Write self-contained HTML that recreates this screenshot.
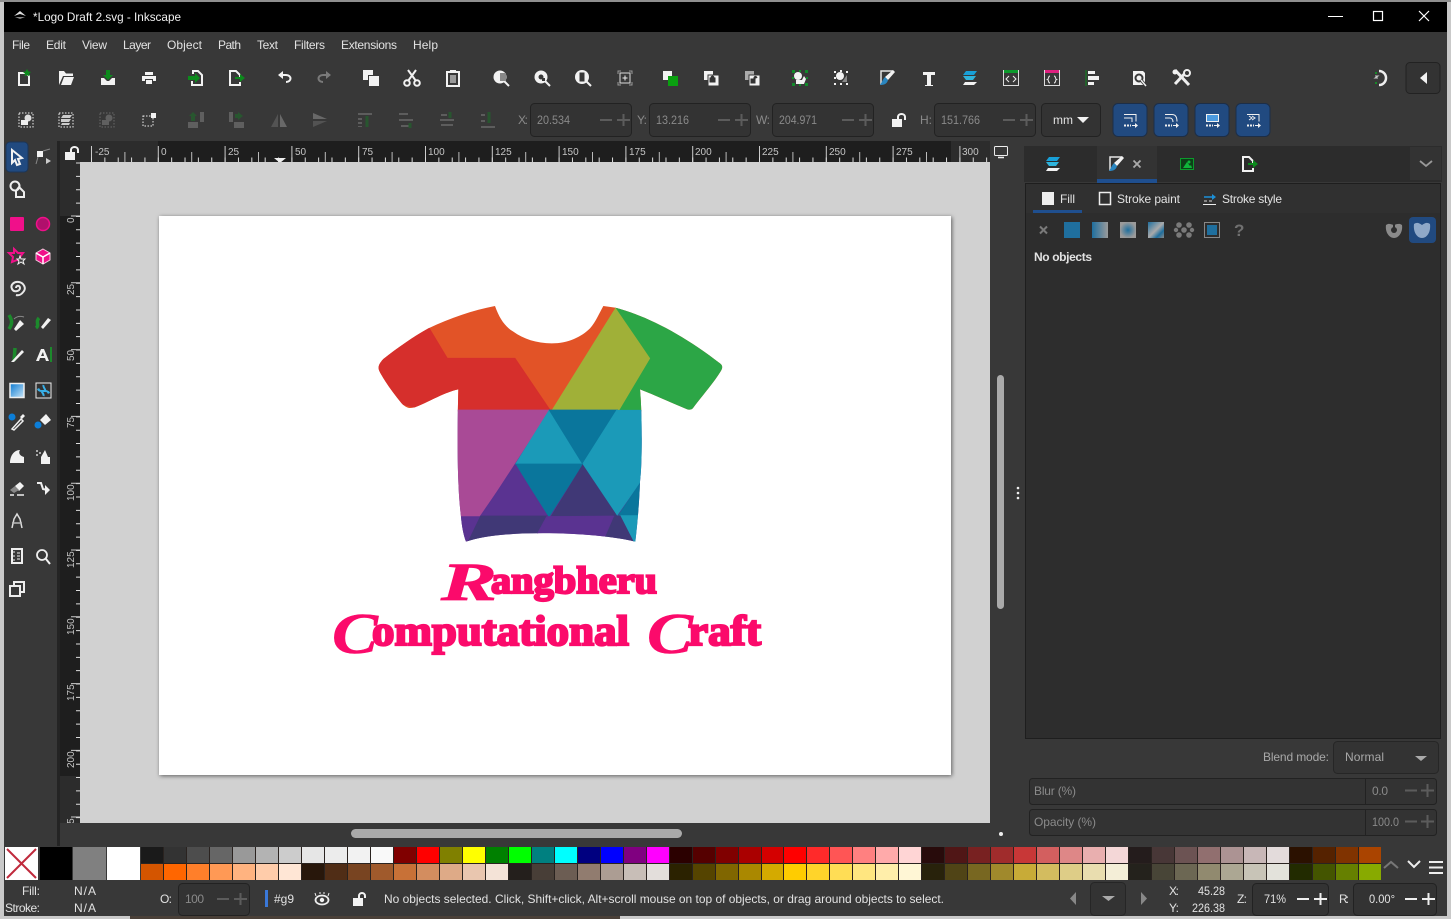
<!DOCTYPE html>
<html><head><meta charset="utf-8"><title>Inkscape</title>
<style>
html,body{margin:0;padding:0;background:#c9c9c9;width:1451px;height:919px;overflow:hidden}
svg{position:absolute;left:0;top:0}
text{font-family:"Liberation Sans",sans-serif;font-size:12px;fill:#e2e2e2}
.d{fill:#8a8a8a}.m{fill:#a8a8a8}
.r{font-size:10px;fill:#c4c4c4}
.f{fill:#333;stroke:#222;stroke-width:1}
.w{fill:#f2f2f2}.g{fill:#0c8a1c}
.o{fill:none;stroke:#f2f2f2;stroke-width:2}
.x{fill:#7a7a7a}.xo{fill:none;stroke:#7a7a7a;stroke-width:2}
.pm{stroke:#5c5c5c;stroke-width:2;fill:none}
.pb{stroke:#eee;stroke-width:2;fill:none}
.lg{font-family:"Liberation Serif",serif;font-weight:bold;fill:#fb0a6b;stroke:#fb0a6b}
#sw{position:absolute;left:141px;top:847px;width:1240px;height:33px;display:grid;grid-template-columns:repeat(54,1fr);grid-template-rows:16px 16px;gap:1px;background:#2a2320}
#sw i{display:block}
</style></head><body>
<svg width="1451" height="919" viewBox="0 0 1451 919" xmlns="http://www.w3.org/2000/svg">
<defs>
<clipPath id="shirt"><path d="M405 33C418 70 435 95 460 110C490 132 530 145 575 145C625 145 665 125 690 100C708 80 720 50 730 33L765 38C860 62 970 120 1080 205C1090 213 1088 220 1080 232C1060 265 1020 310 1000 338C995 346 985 345 975 340C930 322 885 300 840 283C846 340 848 500 840 560C838 620 832 690 826 740C720 712 430 700 318 740C310 720 305 690 303 665C290 560 292 400 295 283C250 292 190 330 160 338C145 342 135 335 125 325C100 295 75 260 60 232C52 218 55 208 70 192C110 160 160 125 205 100C270 70 340 45 405 33Z"/></clipPath>
<clipPath id="rc"><rect x="60" y="162" width="20" height="661"/></clipPath>
<filter id="sh" x="-5%" y="-5%" width="110%" height="110%"><feDropShadow dx="1" dy="1" stdDeviation="2" flood-color="#000" flood-opacity=".55"/></filter>
<linearGradient id="gt" x1="0" y1="0" x2="1" y2="1"><stop offset="0" stop-color="#0a78d0"/><stop offset="1" stop-color="#c8e6f8"/></linearGradient>
</defs>

<!-- desktop behind -->
<rect width="1451" height="919" fill="#c9c9c9"/>
<rect x="0" y="0" width="1451" height="2" fill="#8f8f8f"/>
<rect x="130" y="916" width="490" height="3" fill="#4a4038"/>
<!-- window -->
<rect x="4" y="2" width="1443" height="914" fill="#383838"/>
<rect x="4" y="2" width="1443" height="30" fill="#000"/>
<path d="M14 16l6-5 6 5-6-2z" fill="#ddd"/><path d="M15 17h10l-5 2z" fill="#888"/>
<text x="33" y="21" textLength="148" lengthAdjust="spacingAndGlyphs" style="fill:#f0f0f0">*Logo Draft 2.svg - Inkscape</text>
<path d="M1328 16.500h15" stroke="#fff" stroke-width="1"/>
<rect x="1373.500" y="11.500" width="9" height="9" fill="none" stroke="#fff" stroke-width="1.200"/>
<path d="M1419 11l10 10M1429 11l-10 10" stroke="#fff" stroke-width="1.200"/>

<!-- menu -->
<g>
<text x="12" y="49" textLength="18">File</text><text x="46" y="49" textLength="20">Edit</text><text x="82" y="49" textLength="25">View</text><text x="123" y="49" textLength="28">Layer</text><text x="167" y="49" textLength="35">Object</text><text x="218" y="49" textLength="23">Path</text><text x="257" y="49" textLength="21">Text</text><text x="294" y="49" textLength="31">Filters</text><text x="341" y="49" textLength="56">Extensions</text><text x="413" y="49" textLength="25">Help</text>
</g>

<!-- toolbar 1 -->
<g transform="translate(24,78)"><path d="M-5-5H2L5-2V7H-5Z" class="o"/><path d="M3-9l1.500 2.500 2.500.5-2 1.800.5 2.500-2.500-1.200-2.500 1.200.5-2.500-2-1.800 2.500-.5z" class="g"/></g>
<g transform="translate(66,78)"><path d="M-7-7h5l2 2.500h7V-2H-3L-7 7z" class="w"/><path d="M-5 7l3-8H8L5 7z" class="w"/></g>
<g transform="translate(108,78)"><path d="M-2-8h4v5h3L0 2-5-3h3z" class="g"/><path d="M-7 0h3l3 3h2l3-3h3v7H-7z" class="w"/></g>
<g transform="translate(149,78)"><path d="M-4-6H4v3H-4zM-7-2H7v5H4V1H-4v2H-7zM-3 2H3v4H-3z" class="w"/></g>
<g transform="translate(196,78)"><path d="M-3-4V-7H2L6-3V7H-4V3" class="o"/><path d="M-8-2H-1V-5L4 0-1 5V2H-8z" class="g"/></g>
<g transform="translate(236,78)"><path d="M4 4V7H-6V-7H0L4-3V-1" class="o"/><path d="M-1-1H4V-4L9 0 4 4V1H-1z" class="g"/></g>
<g transform="translate(284,78)"><path d="M-5-3H2C8-3 8 4 2 4" class="o"/><path d="M-1-7L-6-3-1 1z" class="w"/></g>
<g transform="translate(325,78)"><path d="M5-3H-2C-8-3-8 4-2 4" class="xo"/><path d="M1-7L6-3 1 1z" class="x"/></g>
<g transform="translate(371,78)"><rect x="-8" y="-8" width="10" height="10" class="w"/><rect x="-3" y="-3" width="11" height="11" fill="#383838"/><rect x="-2" y="-2" width="10" height="10" class="w"/></g>
<g transform="translate(412,78)"><circle cx="-5" cy="5" r="2.800" class="o"/><circle cx="5" cy="5" r="2.800" class="o"/><path d="M-4 3L4-8M4 3L-4-8" class="o"/></g>
<g transform="translate(453,78)"><rect x="-6" y="-6" width="12" height="14" class="o"/><rect x="-3" y="-8" width="6" height="3" class="w"/><rect x="-3" y="-3" width="6" height="8" fill="#999"/></g>
<g transform="translate(501,78)"><circle cx="-1" cy="-1" r="6.500" class="w"/><path d="M3 3l5 5" class="o"/><rect x="-1" y="-5" width="6" height="8" fill="#888"/></g>
<g transform="translate(542,78)"><circle cx="-1" cy="-1" r="6.500" class="w"/><path d="M3 3l5 5" class="o"/><circle cx="-1" cy="-1" r="2.500" fill="#383838"/><rect x="0" y="0" width="3" height="3" fill="#383838"/></g>
<g transform="translate(583,78)"><circle cx="-1" cy="-1" r="7" class="w"/><path d="M3 3l5 5" class="o"/><rect x="-3.500" y="-5.500" width="5" height="9" fill="#383838"/></g>
<g transform="translate(625,78)"><rect x="-5" y="-5" width="10" height="10" fill="none" stroke="#ddd"/><path d="M-2.500 0h5M0-2.500v5" stroke="#eee"/><path d="M-7-4v-3h3M4-7h3v3M7 4v3H4M-4 7h-3V4" fill="none" stroke="#999"/></g>
<g transform="translate(670,78)"><rect x="-7" y="-7" width="9" height="9" class="w"/><rect x="-2" y="-2" width="10" height="10" fill="#0aa010"/></g>
<g transform="translate(711,78)"><rect x="-7" y="-7" width="9" height="9" class="w"/><rect x="-3" y="-3" width="11" height="11" class="w" stroke="#383838"/><path d="M-1 0h5v4h-5zM0 0a1.500 2 0 0 1 3 0" fill="#333" stroke="#333"/></g>
<g transform="translate(752,78)"><rect x="-7" y="-7" width="9" height="9" fill="#aaa"/><rect x="-3" y="-3" width="11" height="11" class="w" stroke="#383838"/><path d="M-1 1h4v4h-4zM2 1a1.500 2 0 0 1 3-1" fill="#333" stroke="#333"/></g>
<g transform="translate(800,78)"><circle cx="-2" cy="-2" r="4" class="w"/><path d="M-4 2h6l2-4 2 3-2 5h-8z" class="w"/><path d="M-8-8h3v3h-3zM5-8h3v3H5zM-8 5h3v3h-3zM5 5h3v3H5zM-1-8h2v2h-2zM-8-1h2v2h-2zM6-1h2v2H6zM-1 6h2v2h-2z" fill="#118a2a"/></g>
<g transform="translate(841,78)"><circle cx="-1" cy="-2" r="4" class="w"/><path d="M1 4L6-3v7z" fill="#888"/><path d="M-7-7h2v2h-2zM5-7h2v2H5zM-7 5h2v2h-2zM5 5h2v2H5zM-7-1h2v2h-2zM-1 5h2v2h-2zM-1-8h2v2h-2z" class="w"/></g>
<g transform="translate(887,78)"><path d="M-6 7V-7H6" fill="none" stroke="#e6e6e6" stroke-width="1.500"/><path d="M6-8L8-6 1 2-2-1z" class="w"/><path d="M-2-1C-4 1-5 4-7 7-3 7 0 6 1 2z" fill="#2a86c0"/></g>
<g transform="translate(929,78)"><path d="M-6-6H6v3H2V7h2v1h-8V7h2V-3H-6z" class="w"/></g>
<g transform="translate(970,78)"><path d="M-4-7h11l-3 4H-7z" fill="#18a0d8"/><path d="M-7-2H6L3 2H-4z" fill="#2fb4dc"/><path d="M-5 4H7L4 7H-7z" class="w"/></g>
<g transform="translate(1011,78)"><rect x="-7.500" y="-7.500" width="15" height="15" fill="none" stroke="#ddd"/><rect x="-7" y="-8" width="14" height="3" fill="#0c9a2c"/><path d="M-2-2L-5 1l3 3M2-2L5 1 2 4" fill="none" stroke="#eee"/></g>
<g transform="translate(1052,78)"><rect x="-7.500" y="-7.500" width="15" height="15" fill="none" stroke="#ddd"/><rect x="-7" y="-8" width="14" height="3" fill="#e02080"/><path d="M-2-2c-2 0-1 3-2.500 3.500 1.500.5 .5 3.500 2.500 3.500M2-2c2 0 1 3 2.500 3.500-1.500.5-.5 3.500-2.500 3.500" fill="none" stroke="#eee"/></g>
<g transform="translate(1093,78)"><path d="M-7-8v16" stroke="#0c8a1c"/><path d="M-5-7H2v3H-5zM-5-2H6V2H-5zM-5 4H1V7H-5z" class="w"/></g>
<g transform="translate(1139,78)"><path d="M-6-7H4L6-5V7H-6Z" class="w"/><circle cx="0" cy="0" r="3.500" fill="none" stroke="#383838" stroke-width="2"/><path d="M2 2l5 6" stroke="#383838" stroke-width="3"/><path d="M2 2l5 6" stroke="#eee" stroke-width="1.500"/></g>
<g transform="translate(1181,78)"><path d="M-6-8L8 7" stroke="#eee" stroke-width="3"/><path d="M7-8L-6 6" stroke="#eee" stroke-width="3"/><circle cx="6" cy="-5" r="3" fill="#383838" stroke="#eee" stroke-width="2"/><circle cx="-6" cy="-6" r="2.500" class="w"/></g>
<g transform="translate(1381,78)"><path d="M-2-7A7 7 0 1 1-2 7" fill="none" stroke="#eee" stroke-width="2.500"/><path d="M-6-6h2v2h-2zM-6 4h2v2h-2z" fill="#188a2a"/><path d="M-6-2h3l-3 2h3" fill="none" stroke="#ccc"/></g>
<rect x="1406" y="62.500" width="34" height="31" rx="4" fill="#333" stroke="#222"/><path d="M1427 72v12l-7-6z" class="w"/>

<!-- toolbar 2 -->
<g transform="translate(26,120)"><rect x="-7" y="-7" width="14" height="14" fill="none" stroke="#eee" stroke-dasharray="1.500 1.500"/><circle cx="2" cy="-2" r="3.500" fill="#ddd"/><rect x="-5" y="0" width="7" height="5" fill="#eee"/></g>
<g transform="translate(66,120)"><rect x="-7" y="-7" width="14" height="14" fill="none" stroke="#eee" stroke-dasharray="1.500 1.500"/><path d="M-3-5H6L4-2H-5zM-5-1H5L3 2H-5zM-4 3H4L3 5H-5z" fill="#ccc"/></g>
<g transform="translate(107,120)" opacity=".5"><rect x="-7" y="-7" width="14" height="14" fill="none" stroke="#999" stroke-dasharray="1.500 1.500"/><circle cx="2" cy="-2" r="3.500" fill="#888"/><rect x="-5" y="0" width="7" height="5" fill="#888"/></g>
<g transform="translate(149,120)"><rect x="-6" y="-4" width="10" height="10" fill="none" stroke="#eee" stroke-dasharray="1.500 1.500"/><rect x="2" y="-7" width="5" height="5" class="w"/></g>
<g opacity=".6">
<g transform="translate(196,120)"><rect x="-8" y="2" width="10" height="6" class="x"/><rect x="4" y="-8" width="4" height="10" class="x"/><path d="M-5 1V-4h-2L-3-8 1-4H-1V1z" fill="#1e6a2a"/></g>
<g transform="translate(237,120)"><rect x="-3" y="2" width="10" height="6" class="x"/><rect x="-8" y="-8" width="4" height="10" class="x"/><path d="M-2-6h3V-8L6-4 1 0V-2H-2z" fill="#1e6a2a"/></g>
<g transform="translate(279,120)"><path d="M-1-6V7H-8z" fill="#666"/><path d="M1-6V7H8z" fill="#888"/></g>
<g transform="translate(320,120)"><path d="M-7-7L7-1H-7z" fill="#888"/><path d="M-7 1H7L-7 7z" fill="#666"/></g>
<g transform="translate(365,120)"><path d="M-7-7H7v2H-7zM-7-2h4v2h-4zM-7 2h4v2h-4zM-7 6h4v1h-4z" fill="#777"/><path d="M2-4v11" stroke="#1e6a2a" stroke-width="3"/></g>
<g transform="translate(406,120)"><path d="M-7-7H2v2H-7zM-7-1H7v2H-7zM-5 5H3v2H-5z" fill="#777"/><path d="M4 3v5" stroke="#1e6a2a" stroke-width="3"/></g>
<g transform="translate(447,120)"><path d="M-7-1H7v2H-7zM-6 4H6v2H-6zM-6-6H0v2H-6z" fill="#777"/><path d="M3-8v6" stroke="#1e6a2a" stroke-width="3"/></g>
<g transform="translate(488,120)"><path d="M-7 6H7v2H-7zM-7 0h4v2h-4zM-7-6h4v2h-4z" fill="#777"/><path d="M1-8v11" stroke="#1e6a2a" stroke-width="3"/></g>
</g>

<text x="518" y="124" class="d" textLength="10">X:</text>
<rect x="530.500" y="103.500" width="101" height="33" rx="4" class="f"/><text x="537" y="124" class="d" textLength="33" lengthAdjust="spacingAndGlyphs">20.534</text><path d="M600 120h12M617 120h13M623.500 114v12" class="pm"/>
<text x="637" y="124" class="d" textLength="10">Y:</text>
<rect x="649.500" y="103.500" width="101" height="33" rx="4" class="f"/><text x="656" y="124" class="d" textLength="33" lengthAdjust="spacingAndGlyphs">13.216</text><path d="M718 120h12M735 120h13M741.500 114v12" class="pm"/>
<text x="756" y="124" class="d" textLength="14">W:</text>
<rect x="772.500" y="103.500" width="101" height="33" rx="4" class="f"/><text x="779" y="124" class="d" textLength="38" lengthAdjust="spacingAndGlyphs">204.971</text><path d="M842 120h12M859 120h13M865.500 114v12" class="pm"/>
<g transform="translate(898,120)"><rect x="-6" y="-1" width="10" height="8" class="w"/><path d="M0-1V-3C0-7 7-7 7-3V0" fill="none" stroke="#f2f2f2" stroke-width="2"/></g>
<text x="920" y="124" class="d" textLength="12">H:</text>
<rect x="934.500" y="103.500" width="101" height="33" rx="4" class="f"/><text x="941" y="124" class="d" textLength="39" lengthAdjust="spacingAndGlyphs">151.766</text><path d="M1003 120h12M1020 120h13M1026.500 114v12" class="pm"/>
<rect x="1041.500" y="103.500" width="59" height="33" rx="4" class="f"/><text x="1053" y="124" textLength="20">mm</text><path d="M1077 117h12l-6 6z" class="w"/>
<g fill="#214a80" stroke="#1c2e48"><rect x="1113" y="103.500" width="34" height="33" rx="5"/><rect x="1154" y="103.500" width="34" height="33" rx="5"/><rect x="1195" y="103.500" width="34" height="33" rx="5"/><rect x="1236" y="103.500" width="34" height="33" rx="5"/></g>
<g fill="none" stroke="#f0f0f0">
<path d="M1124 114.500h12v7M1124 118h8v4"/><path d="M1165 114.500h7c4 0 5 3 5 7M1165 118h5c2 0 3 2 3 4"/>
<rect x="1206.500" y="114.500" width="12" height="7" fill="#4a9ae0"/><path d="M1247 114.500h12v7M1249 116l3 2-3 2M1252 116l3 2-3 2"/></g>
<g fill="#f0f0f0"><path d="M1124 124.500h2v2h-2zM1127 124.500h2v2h-2zM1130 124.500h1v2h-1zM1132 125h3v-2l3 2.500-3 2.500v-2h-3z"/><path d="M1165 124.500h2v2h-2zM1168 124.500h2v2h-2zM1171 124.500h1v2h-1zM1173 125h3v-2l3 2.500-3 2.500v-2h-3z"/><path d="M1206 124.500h2v2h-2zM1209 124.500h2v2h-2zM1212 124.500h1v2h-1zM1214 125h3v-2l3 2.500-3 2.500v-2h-3z"/><path d="M1247 124.500h2v2h-2zM1250 124.500h2v2h-2zM1253 124.500h1v2h-1zM1255 125h3v-2l3 2.500-3 2.500v-2h-3z"/></g>

<!-- left tools -->
<rect x="4" y="141" width="53" height="705" fill="#383838"/>
<rect x="57" y="141" width="3" height="705" fill="#242424"/>
<rect x="6" y="142" width="22" height="30" rx="4" fill="#214a80" stroke="#1b3558"/>
<g transform="translate(17,157)"><path d="M-5-7L5 1 1 2 3 7 0 8-2 3-5 6z" fill="none" stroke="#f2f2f2" stroke-width="2"/></g>
<g transform="translate(43,157)"><rect x="-6" y="-6" width="6" height="6" class="w"/><path d="M0-6L7-8M-5 0L-7 7" stroke="#888"/><path d="M3 1l5 3-5 3z" fill="#ccc"/></g>
<g transform="translate(17,189)"><circle cx="-2" cy="-3" r="4.500" fill="none" stroke="#eee" stroke-width="2"/><path d="M2-2L7 3V8H-1V2z" fill="none" stroke="#eee" stroke-width="2"/></g>
<rect x="10" y="217" width="14" height="14" rx="1" fill="#f0108a"/>
<circle cx="43" cy="224" r="6.500" fill="#b0106c" stroke="#f0108a" stroke-width="1.500"/>
<g transform="translate(17,256)"><path d="M-3-7L1-3 6-3 3 1 4 5 0 4-5 6-4 1-8-3-3-3z" fill="none" stroke="#f0108a" stroke-width="2"/><path d="M3 0L4 3 8 3 6 5 7 8 4 6 1 8 2 5 0 3 2 3z" fill="#383838" stroke="#f0f0f0"/></g>
<g transform="translate(43,256)"><path d="M0-7L7-3V4L0 8-7 4V-3Z" fill="#f0108a" stroke="#f4c8dc"/><path d="M-7-3L0 1 7-3M0 1V8" fill="none" stroke="#fff" stroke-width="1.500"/></g>
<path d="M16 288c0-3 4-3 4 0s-6 5-8 1 2-8 7-7 7 6 5 9-5 5-8 4" fill="none" stroke="#e8e8e8" stroke-width="2"/>
<g transform="translate(17,323)"><path d="M-8-8c3 5 4 8 0 14" stroke="#1c8a2c" stroke-width="3.500" fill="none"/><path d="M-3 6L3-3 7 1-1 8z" class="w"/><path d="M-3-4C0-7 4-7 7-6" stroke="#888" fill="none"/></g>
<g transform="translate(43,323)"><path d="M-7 5c4-3-1-6 3-10" stroke="#1c8a2c" stroke-width="3.500" fill="none"/><path d="M-2 4L5-5 8-3 0 6z" class="w"/></g>
<g transform="translate(17,355)"><path d="M-2-7L-3 6" stroke="#1c8a2c" stroke-width="3.500"/><path d="M-6 7L5-5 7-3-3 7z" class="w"/></g>
<g transform="translate(43,355)"><path d="M-7 6L-2-6H1L6 6H3L2 3H-3L-4 6ZM-2 1H1L0-3Z" class="w"/><path d="M8-8V7" stroke="#1c8a2c" stroke-width="2"/></g>
<rect x="10" y="383.500" width="14" height="14" fill="url(#gt)" stroke="#eee" stroke-width="1.500"/>
<rect x="36" y="383" width="15" height="15" fill="#333" stroke="#eee"/><path d="M43.500 385c-1 3 5 6-1 6s-2-3-5-1M43.500 396c1-3-5-5 1-5s2 3 5 1" fill="none" stroke="#38b0e8" stroke-width="2"/>
<g transform="translate(17,422)"><circle cx="-5" cy="-5" r="3.500" fill="#0c7ed8"/><path d="M-5 7L4-3 6-1-3 8z" fill="#333" stroke="#eee" stroke-width="1.500"/><path d="M3-5L6-8 8-6 5-3z" class="w"/></g>
<g transform="translate(43,422)"><circle cx="-5" cy="3" r="3.500" fill="#0c7ed8"/><path d="M-3-2L3-8 8-2 2 3z" class="w"/></g>
<g transform="translate(17,457)"><path d="M-7 6C-7-1-3-7 3-7 1-4 3-1 7 0V6z" class="w"/></g>
<g transform="translate(43,457)"><path d="M-2 0L2-7 5 0H7V7H-2z" class="w"/><path d="M-7-7h2v2h-2zM-4-5h2v2h-2zM-7-3h2v2h-2z" fill="#aaa"/></g>
<g transform="translate(17,489)"><path d="M-2-3L3-7 7-3 2 2z" class="w"/><path d="M-2-3L-7 1-3 4 2 1z" fill="#888"/><path d="M-7 6H-3M0 6H7" stroke="#eee" stroke-width="1.500"/></g>
<g transform="translate(43,489)"><path d="M-6-6h4l2 6 4 1" fill="none" stroke="#eee" stroke-width="2"/><path d="M2-4L7 1 2 6z" class="w"/></g>
<g transform="translate(17,521)"><path d="M-5 7L-3-2 0-7 3-2 5 7" fill="none" stroke="#ddd" stroke-width="1.500"/><path d="M-5 2H5" stroke="#bbb" stroke-width="1.500"/></g>
<g transform="translate(17,556)"><path d="M-5-7H5V7H-5z" fill="none" stroke="#eee" stroke-width="2"/><path d="M-6-4h4M-6 0h4M-6 4h4M0-3h3M0 0h3M0 3h3" stroke="#eee"/></g>
<g transform="translate(43,556)"><circle cx="-1" cy="-1" r="5" fill="none" stroke="#eee" stroke-width="1.800"/><path d="M3 3l4 5" class="o"/></g>
<g transform="translate(17,589)"><path d="M-7-3H3V7H-7zM-3-3V-7H7V3H3" fill="none" stroke="#eee" stroke-width="2"/></g>

<!-- rulers -->
<rect x="60" y="141" width="930" height="21" fill="#2c2c2c"/>
<rect x="158" y="141" width="793" height="21" fill="#1e1e1e"/>
<rect x="60" y="141" width="20" height="682" fill="#2c2c2c"/>
<rect x="60" y="216" width="20" height="560" fill="#1e1e1e"/>
<path d="M91.500 146V162M158.300 146V162M225.100 146V162M291.900 146V162M358.700 146V162M425.500 146V162M492.300 146V162M559.100 146V162M625.900 146V162M692.700 146V162M759.500 146V162M826.300 146V162M893.100 146V162M959.900 146V162" stroke="#ccc"/>
<line x1="91" y1="160" x2="990" y2="160" stroke="#ddd" stroke-width="5" stroke-dasharray="1 12.360"/>
<line x1="124.400" y1="157" x2="990" y2="157" stroke="#bbb" stroke-width="10" stroke-dasharray="1 65.800"/>
<g><text class="r" x="95" y="155">-25</text><text class="r" x="161" y="155">0</text><text class="r" x="228" y="155">25</text><text class="r" x="295" y="155">50</text><text class="r" x="362" y="155">75</text><text class="r" x="428" y="155">100</text><text class="r" x="495" y="155">125</text><text class="r" x="562" y="155">150</text><text class="r" x="629" y="155">175</text><text class="r" x="695" y="155">200</text><text class="r" x="762" y="155">225</text><text class="r" x="829" y="155">250</text><text class="r" x="896" y="155">275</text><text class="r" x="962" y="155">300</text></g>
<path d="M274 158h12l-6 5z" fill="#eee"/>
<line x1="78" y1="162.500" x2="78" y2="823" stroke="#ddd" stroke-width="4" stroke-dasharray="1 12.360"/>
<path d="M71 216H80M71 282.800H80M71 349.600H80M71 416.400H80M71 483.200H80M71 550H80M71 616.800H80M71 683.600H80M71 750.400H80M71 817H80" stroke="#ccc"/>
<g clip-path="url(#rc)">
<text class="r" transform="translate(74,223) rotate(-90)">0</text><text class="r" transform="translate(74,295) rotate(-90)">25</text><text class="r" transform="translate(74,361) rotate(-90)">50</text><text class="r" transform="translate(74,428) rotate(-90)">75</text><text class="r" transform="translate(74,501) rotate(-90)">100</text><text class="r" transform="translate(74,568) rotate(-90)">125</text><text class="r" transform="translate(74,635) rotate(-90)">150</text><text class="r" transform="translate(74,701) rotate(-90)">175</text><text class="r" transform="translate(74,768) rotate(-90)">200</text><text class="r" transform="translate(74,835) rotate(-90)">225</text>
</g>
<g transform="translate(71,153)"><rect x="-6" y="-1" width="10" height="8" class="w"/><path d="M0-1V-3C0-7 7-7 7-3V0" fill="none" stroke="#f2f2f2" stroke-width="2"/></g>
<g transform="translate(1001,152)"><rect x="-6.500" y="-5.500" width="13" height="9" rx="1" fill="none" stroke="#eee"/><path d="M-3 5.500h6" stroke="#eee" stroke-width="1.500"/></g>

<!-- canvas -->
<rect x="80" y="162" width="910" height="661" fill="#d1d1d1"/>
<rect x="159" y="216" width="792" height="559" fill="#fff" filter="url(#sh)"/>
<g transform="translate(360,295) scale(.33333)" clip-path="url(#shirt)">
<rect x="0" y="0" width="1140" height="350" fill="#e25327"/>
<rect x="0" y="345" width="1140" height="430" fill="#5a3391"/>
<g stroke-width="2.500">
<path d="M205 95L262 190H465L570 345H200L0 300V150Z" fill="#d62f2c" stroke="#d62f2c"/>
<path d="M768 38L872 190 778 348H575Z" fill="#a0b038" stroke="#a0b038"/>
<path d="M768 38L1120 100V400L846 348H778L872 190Z" fill="#2ca646" stroke="#2ca646"/>
<path d="M250 345H568L360 665H250Z" fill="#a94a96" stroke="#a94a96"/>
<path d="M568 345L668 507H467Z" fill="#1b9ab8" stroke="#1b9ab8"/>
<path d="M568 345H772L668 507Z" fill="#0a769c" stroke="#0a769c"/>
<path d="M770 346H880V520L845 555 770 662 668 507Z" fill="#1b9ab8" stroke="#1b9ab8"/>
<path d="M467 507H668L567 665Z" fill="#0a769c" stroke="#0a769c"/>
<path d="M467 510L560 665H360Z" fill="#5a3391" stroke="#5a3391"/>
<path d="M668 510L770 662H575Z" fill="#403876" stroke="#403876"/>
<path d="M850 550L775 662H850Z" fill="#0a769c" stroke="#0a769c"/>
<path d="M780 662H850V750H825Z" fill="#1b9ab8" stroke="#1b9ab8"/>
<path d="M250 665H360L320 750H250Z" fill="#5a3391" stroke="#5a3391"/>
<path d="M362 663H562L530 720 320 750Z" fill="#403876" stroke="#403876"/>
<path d="M560 665L760 663 735 730 530 720Z" fill="#5a3391" stroke="#5a3391"/>
<path d="M763 665L780 662 825 750 735 730Z" fill="#403876" stroke="#403876"/>
</g>
</g>
<text class="lg" x="441" y="600" textLength="56" lengthAdjust="spacingAndGlyphs" style="font-size:54px;font-style:italic;stroke-width:.8">R</text>
<text class="lg" x="491" y="593" textLength="166" lengthAdjust="spacingAndGlyphs" style="font-size:38px;stroke-width:2.200">angbheru</text>
<text class="lg" x="332" y="653" textLength="46" lengthAdjust="spacingAndGlyphs" style="font-size:58px;font-style:italic;stroke-width:.5">C</text>
<text class="lg" x="372" y="645" textLength="257" lengthAdjust="spacingAndGlyphs" style="font-size:42px;stroke-width:2.200">omputational</text>
<text class="lg" x="647" y="653" textLength="46" lengthAdjust="spacingAndGlyphs" style="font-size:58px;font-style:italic;stroke-width:.5">C</text>
<text class="lg" x="688" y="645" textLength="73" lengthAdjust="spacingAndGlyphs" style="font-size:42px;stroke-width:2.200">raft</text>

<!-- scrollbars -->
<rect x="997" y="375" width="7" height="234" rx="3.500" fill="#aaa"/>
<rect x="351" y="829" width="331" height="9" rx="4.500" fill="#aaa"/>
<circle cx="1001" cy="834" r="2" fill="#eee"/>
<circle cx="1018" cy="488" r="1.300" fill="#eee"/><circle cx="1018" cy="493" r="1.300" fill="#eee"/><circle cx="1018" cy="498" r="1.300" fill="#eee"/>

<!-- dock -->
<rect x="1024" y="146" width="418" height="36" fill="#2c2c2c"/>
<rect x="1097" y="146" width="60" height="36" fill="#333"/>
<rect x="1097" y="179" width="60" height="4" fill="#1f4f8f"/>
<rect x="1410" y="147" width="31" height="33" fill="#333"/>
<path d="M1420 161l6 5 6-5" fill="none" stroke="#999" stroke-width="1.800"/>
<g transform="translate(1053,164)"><path d="M-4-7h11l-3 4H-7z" fill="#18a0d8"/><path d="M-7-2H6L3 2H-4z" fill="#2fb4dc"/><path d="M-5 4H7L4 7H-7z" class="w"/></g>
<g transform="translate(1116,164)"><path d="M-6 7V-7H6" fill="none" stroke="#e6e6e6" stroke-width="1.500"/><path d="M6-8L8-6 1 2-2-1z" class="w"/><path d="M-2-1C-4 1-5 4-7 7-3 7 0 6 1 2z" fill="#2a86c0"/></g>
<path d="M1133.500 160.500l7 7M1140.500 160.500l-7 7" stroke="#aaa" stroke-width="1.800"/>
<g transform="translate(1187,164)"><rect x="-6.500" y="-5.500" width="13" height="11" fill="#0d3f18" stroke="#0c9a2c"/><path d="M-4 4L0-2 3 2 4 1 5 4z" fill="#0fb53a"/><circle cx="2" cy="-2" r="1.500" fill="#0fb53a"/></g>
<g transform="translate(1249,164)"><path d="M4 4V7H-6V-7H0L4-3V-1" class="o"/><path d="M-1-1H4V-4L9 0 4 4V1H-1z" class="g"/></g>

<rect x="1025.500" y="183.500" width="415" height="555" fill="#2d2d2d" stroke="#1e1e1e"/>
<rect x="1026" y="184" width="414" height="29" fill="#303030"/>
<rect x="1033" y="210" width="49" height="3" fill="#1f4f8f"/>
<rect x="1042" y="192" width="12" height="13" fill="#eee"/>
<text x="1060" y="203" textLength="15">Fill</text>
<rect x="1099.500" y="192.500" width="11" height="12" fill="none" stroke="#eee" stroke-width="1.500"/>
<text x="1117" y="203" textLength="63">Stroke paint</text>
<g><path d="M1204 197h9" stroke="#1c90d8" stroke-width="1.500"/><path d="M1212 194l4 3-4 3z" fill="#1c90d8"/><path d="M1204 201h3M1209 201h3" stroke="#ddd"/><path d="M1203 204.500h13" stroke="#eee"/></g>
<text x="1222" y="203" textLength="60">Stroke style</text>
<path d="M1040 226.500l7 7M1047 226.500l-7 7" stroke="#7a7a7a" stroke-width="2"/>
<rect x="1064" y="222" width="16" height="16" fill="#1f6f9e"/>
<defs><linearGradient id="lg"><stop offset="0" stop-color="#1f6f9e"/><stop offset="1" stop-color="#9a9a9a"/></linearGradient><radialGradient id="rg"><stop offset="0" stop-color="#1f6f9e"/><stop offset="1" stop-color="#9a9a9a"/></radialGradient><linearGradient id="mg" x1="0" y1="0" x2="1" y2="1"><stop offset="0" stop-color="#1f6f9e"/><stop offset=".5" stop-color="#aaa"/><stop offset=".75" stop-color="#1f6f9e"/><stop offset="1" stop-color="#888"/></linearGradient></defs>
<rect x="1092" y="222" width="16" height="16" fill="url(#lg)"/>
<rect x="1120" y="222" width="16" height="16" fill="url(#rg)"/>
<rect x="1148" y="222" width="16" height="16" fill="url(#mg)"/>
<g fill="#7a7a7a"><circle cx="1179" cy="225" r="2.800"/><circle cx="1189" cy="225" r="2.800"/><circle cx="1184" cy="230" r="2.800"/><circle cx="1179" cy="235" r="2.800"/><circle cx="1189" cy="235" r="2.800"/><circle cx="1176" cy="230" r="2.200"/><circle cx="1192" cy="230" r="2.200"/></g>
<rect x="1204.500" y="222.500" width="15" height="15" fill="none" stroke="#888"/><rect x="1207" y="225" width="10" height="10" fill="#1f6f9e"/>
<text x="1234" y="236" style="font-size:17px;font-weight:bold;fill:#707070">?</text>
<path d="M1386 225c3-2 4-1 8 0 4-1 5-2 8 0 1 7-3 13-8 13s-9-6-8-13z" fill="#8a8a8a"/><circle cx="1394" cy="230" r="3" fill="#2d2d2d"/><path d="M1393 224h2v4h-2z" fill="#2d2d2d"/>
<rect x="1409" y="217" width="27" height="26" rx="4" fill="#214a80"/>
<path d="M1414 224c3-2 5-1 8 1 3-2 5-3 8-1 1 8-3 14-8 14s-9-6-8-14z" fill="#8fa8c8"/>
<text x="1034" y="261" textLength="58" style="font-weight:bold;fill:#e2e2e2">No objects</text>

<text x="1263" y="761" class="m" textLength="66">Blend mode:</text>
<rect x="1333.500" y="741.500" width="105" height="32" rx="4" fill="#333" stroke="#262626"/>
<text x="1345" y="761" class="m" textLength="39">Normal</text>
<path d="M1415 756h12l-6 5z" fill="#aaa"/>
<rect x="1029.500" y="778.500" width="407" height="26" rx="3" class="f"/>
<path d="M1365.500 778v26" stroke="#222"/>
<text x="1034" y="795" class="d" textLength="42">Blur (%)</text>
<text x="1372" y="795" class="d" textLength="16">0.0</text>
<path d="M1405 790.500h12M1421 790.500h13M1427.500 784v13" class="pm"/>
<rect x="1029.500" y="809.500" width="407" height="26" rx="3" class="f"/>
<path d="M1365.500 809v26" stroke="#222"/>
<text x="1034" y="826" class="d" textLength="62">Opacity (%)</text>
<text x="1372" y="826" class="d" textLength="27" lengthAdjust="spacingAndGlyphs">100.0</text>
<path d="M1405 821.500h12M1421 821.500h13M1427.500 815v13" class="pm"/>

<!-- palette big -->
<rect x="5" y="847" width="33" height="33" fill="#fff"/>
<path d="M7 849L36 878M36 849L7 878" stroke="#c02a3c" stroke-width="2"/>
<rect x="40" y="847" width="32" height="33" fill="#000"/>
<rect x="73" y="847" width="33" height="33" fill="#808080"/>
<rect x="107" y="847" width="33" height="33" fill="#fff"/>
<path d="M1384 868l7-6 7 6" fill="none" stroke="#777" stroke-width="2"/>
<path d="M1408 861l6 6 6-6" fill="none" stroke="#eee" stroke-width="2"/>
<path d="M1429 862h14M1429 867.500h14M1429 873h14" stroke="#eee" stroke-width="2"/>

<!-- status -->
<text x="22" y="895" textLength="18">Fill:</text><text x="5" y="912" textLength="35">Stroke:</text>
<text x="74" y="895" textLength="22">N/A</text><text x="74" y="912" textLength="22">N/A</text>
<text x="160" y="903" textLength="12">O:</text>
<rect x="178.500" y="883.500" width="71" height="32" rx="4" class="f"/>
<text x="185" y="903" class="d" textLength="19">100</text>
<path d="M217 899h12M234 899h13M240.500 893v12" class="pm"/>
<rect x="265" y="890" width="3" height="17" fill="#3a78d8"/>
<text x="274" y="903" textLength="20">#g9</text>
<g transform="translate(322,899)"><ellipse cx="0" cy="1" rx="6.500" ry="4.500" fill="none" stroke="#eee" stroke-width="1.800"/><circle cx="0" cy="1" r="2.200" class="w"/><path d="M-6-3L-7-6M-2-5V-7M2-5V-7M6-3L7-6" stroke="#eee"/></g>
<g transform="translate(358,899)"><rect x="-5" y="-1" width="10" height="8" class="w"/><path d="M1-1V-3C1-7 7-7 7-3V-1" fill="none" stroke="#f2f2f2" stroke-width="2"/></g>
<text x="384" y="903" textLength="560" lengthAdjust="spacingAndGlyphs">No objects selected. Click, Shift+click, Alt+scroll mouse on top of objects, or drag around objects to select.</text>
<path d="M1076 892v13l-6-6.500z" fill="#888"/>
<rect x="1090.500" y="882.500" width="35" height="33" rx="4" fill="#333" stroke="#262626"/>
<path d="M1102 896h13l-6.500 5z" fill="#aaa"/>
<path d="M1141 892v13l6-6.500z" fill="#888"/>
<text x="1169" y="895" textLength="10">X:</text><text x="1169" y="912" textLength="10">Y:</text>
<text x="1198" y="895" textLength="27" lengthAdjust="spacingAndGlyphs">45.28</text><text x="1192" y="912" textLength="33" lengthAdjust="spacingAndGlyphs">226.38</text>
<text x="1237" y="903" textLength="10">Z:</text>
<rect x="1252.500" y="883.500" width="76" height="32" rx="4" class="f"/>
<text x="1264" y="903" textLength="22" lengthAdjust="spacingAndGlyphs">71%</text>
<path d="M1297 899h12M1314 899h13M1320.500 893v12" class="pb"/>
<text x="1339" y="903" textLength="10">R:</text>
<rect x="1353.500" y="883.500" width="83" height="32" rx="4" class="f"/>
<text x="1369" y="903" textLength="26" lengthAdjust="spacingAndGlyphs">0.00°</text>
<path d="M1405 899h12M1422 899h13M1428.500 893v12" class="pb"/>
</svg>
<div id="sw"><i style="background:#1a1a1a"></i><i style="background:#333"></i><i style="background:#4d4d4d"></i><i style="background:#666"></i><i style="background:#999"></i><i style="background:#b3b3b3"></i><i style="background:#ccc"></i><i style="background:#e6e6e6"></i><i style="background:#ececec"></i><i style="background:#f2f2f2"></i><i style="background:#f9f9f9"></i><i style="background:#800000"></i><i style="background:#f00"></i><i style="background:#808000"></i><i style="background:#ff0"></i><i style="background:#008000"></i><i style="background:#0f0"></i><i style="background:#008080"></i><i style="background:#0ff"></i><i style="background:#000080"></i><i style="background:#00f"></i><i style="background:#800080"></i><i style="background:#f0f"></i><i style="background:#2b0000"></i><i style="background:#500"></i><i style="background:#800000"></i><i style="background:#a00"></i><i style="background:#d40000"></i><i style="background:#f00"></i><i style="background:#ff2a2a"></i><i style="background:#f55"></i><i style="background:#ff8080"></i><i style="background:#faa"></i><i style="background:#ffd5d5"></i><i style="background:#280b0b"></i><i style="background:#501616"></i><i style="background:#782121"></i><i style="background:#a02c2c"></i><i style="background:#c83737"></i><i style="background:#d35f5f"></i><i style="background:#de8787"></i><i style="background:#e9afaf"></i><i style="background:#f4d7d7"></i><i style="background:#241c1c"></i><i style="background:#483737"></i><i style="background:#6c5353"></i><i style="background:#916f6f"></i><i style="background:#ac9393"></i><i style="background:#c8b7b7"></i><i style="background:#e3dbdb"></i><i style="background:#2b1100"></i><i style="background:#520"></i><i style="background:#803300"></i><i style="background:#a40"></i><i style="background:#d45500"></i><i style="background:#f60"></i><i style="background:#ff7f2a"></i><i style="background:#f95"></i><i style="background:#ffb380"></i><i style="background:#fca"></i><i style="background:#ffe6d5"></i><i style="background:#28170b"></i><i style="background:#502d16"></i><i style="background:#784421"></i><i style="background:#a05a2c"></i><i style="background:#c87137"></i><i style="background:#d38d5f"></i><i style="background:#deaa87"></i><i style="background:#e9c6af"></i><i style="background:#f4e3d7"></i><i style="background:#241f1c"></i><i style="background:#483e37"></i><i style="background:#6c5d53"></i><i style="background:#917c6f"></i><i style="background:#ac9d93"></i><i style="background:#c8beb7"></i><i style="background:#e3dedb"></i><i style="background:#2b2200"></i><i style="background:#540"></i><i style="background:#806600"></i><i style="background:#a80"></i><i style="background:#d4aa00"></i><i style="background:#fc0"></i><i style="background:#ffd42a"></i><i style="background:#fd5"></i><i style="background:#ffe680"></i><i style="background:#fea"></i><i style="background:#fff6d5"></i><i style="background:#28220b"></i><i style="background:#504416"></i><i style="background:#786721"></i><i style="background:#a0892c"></i><i style="background:#c8ab37"></i><i style="background:#d3bc5f"></i><i style="background:#decd87"></i><i style="background:#e9ddaf"></i><i style="background:#f4eed7"></i><i style="background:#24221c"></i><i style="background:#484537"></i><i style="background:#6c6753"></i><i style="background:#918a6f"></i><i style="background:#aca793"></i><i style="background:#c8c4b7"></i><i style="background:#e3e2db"></i><i style="background:#222b00"></i><i style="background:#450"></i><i style="background:#668000"></i><i style="background:#8a0"></i></div>
</body></html>
